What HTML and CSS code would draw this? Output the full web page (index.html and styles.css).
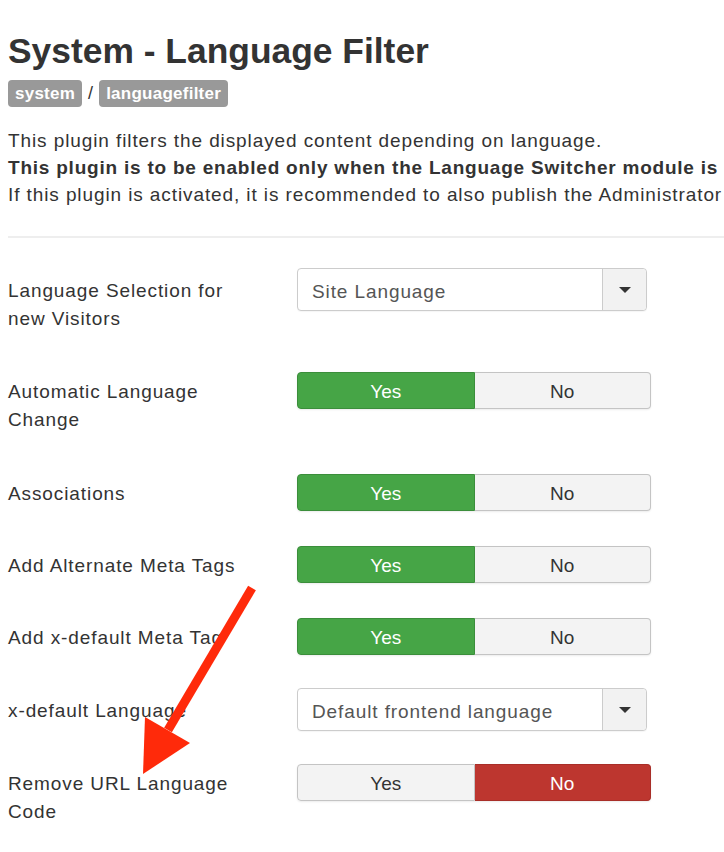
FILE: index.html
```html
<!DOCTYPE html>
<html>
<head>
<meta charset="utf-8">
<link rel="stylesheet" href="styles.css">
</head>
<body>
<div class="page">
  <h1 class="title">System - Language Filter</h1>
  <div class="tags">
    <span class="tag">system</span>
    <span class="slash">/</span>
    <span class="tag">languagefilter</span>
  </div>
  <div class="desc">
    <p>This plugin filters the displayed content depending on language.</p>
    <p class="strong">This plugin is to be enabled only when the Language Switcher module is published.</p>
    <p>If this plugin is activated, it is recommended to also publish the Administrator multilingual status module.</p>
  </div>
  <div class="rule"></div>

  <div class="form">
    <div class="row row-first">
      <div class="label label-select">Language Selection for<br>new Visitors</div>
      <div class="select">
        <span class="select-text">Site Language</span>
        <span class="select-btn"><span class="caret"></span></span>
      </div>
    </div>

    <div class="row row-second">
      <div class="label">Automatic Language<br>Change</div>
      <div class="toggle">
        <span class="opt yes active-yes">Yes</span>
        <span class="opt no">No</span>
      </div>
    </div>

    <div class="row">
      <div class="label">Associations</div>
      <div class="toggle">
        <span class="opt yes active-yes">Yes</span>
        <span class="opt no">No</span>
      </div>
    </div>

    <div class="row">
      <div class="label">Add Alternate Meta Tags</div>
      <div class="toggle">
        <span class="opt yes active-yes">Yes</span>
        <span class="opt no">No</span>
      </div>
    </div>

    <div class="row row-short">
      <div class="label">Add x-default Meta Tag</div>
      <div class="toggle">
        <span class="opt yes active-yes">Yes</span>
        <span class="opt no">No</span>
      </div>
    </div>

    <div class="row row-select">
      <div class="label label-select">x-default Language</div>
      <div class="select">
        <span class="select-text">Default frontend language</span>
        <span class="select-btn"><span class="caret"></span></span>
      </div>
    </div>

    <div class="row">
      <div class="label">Remove URL Language<br>Code</div>
      <div class="toggle">
        <span class="opt yes">Yes</span>
        <span class="opt no active-no">No</span>
      </div>
    </div>
  </div>

  <svg class="arrow" width="724" height="852" viewBox="0 0 724 852">
    <line x1="252" y1="588" x2="168" y2="730" stroke="#ff2a0a" stroke-width="9"/>
    <polygon points="145,717 190,743 143,774" fill="#ff2a0a"/>
  </svg>
</div>
</body>
</html>
```

FILE: styles.css
```css
html, body {
  margin: 0;
  padding: 0;
  background: #fff;
}

body {
  width: 724px;
  height: 852px;
  overflow: hidden;
  font-family: "Liberation Sans", Arial, Helvetica, sans-serif;
  color: #333;
}

.page {
  position: relative;
  padding: 31px 0 0 8px;
}

.title {
  margin: 0;
  font-size: 35.4px;
  line-height: 40px;
  font-weight: bold;
  color: #333;
}

.tags {
  margin-top: 9px;
  display: flex;
  align-items: center;
  gap: 6px;
  height: 27px;
}

.tag {
  background: #999;
  color: #fff;
  font-weight: bold;
  font-size: 17px;
  letter-spacing: 0.25px;
  line-height: 27px;
  padding: 0 7px;
  border-radius: 4px;
}

.slash {
  font-size: 18px;
  color: #333;
}

.desc {
  margin-top: 20px;
  font-size: 19px;
  letter-spacing: 0.9px;
  line-height: 27px;
  white-space: nowrap;
}

.desc p {
  margin: 0;
}

.desc .strong {
  font-weight: bold;
  letter-spacing: 0.78px;
}

.rule {
  margin-top: 28px;
  height: 2px;
  background: #eeeeee;
}

.form {
  margin-top: 30px;
}

.row {
  display: flex;
  align-items: flex-start;
  height: 72px;
}

.row-first {
  height: 104px;
}

.row-second {
  height: 102px;
}

.row-short {
  height: 70px;
}

.row-select {
  height: 76px;
}

.label {
  width: 289px;
  flex: none;
  font-size: 19px;
  letter-spacing: 0.9px;
  line-height: 28px;
  color: #333;
  padding-top: 6px;
}

.label-select {
  padding-top: 9px;
}

.select {
  width: 348px;
  height: 41px;
  border: 1px solid #cccccc;
  border-radius: 4px;
  display: flex;
  align-items: stretch;
  background: #fff;
  box-shadow: 0 1px 1px rgba(0,0,0,0.04);
}

.select-text {
  flex: 1;
  font-size: 19px;
  letter-spacing: 0.9px;
  line-height: 41px;
  padding-top: 2px;
  padding-left: 14px;
  color: #555;
}

.select-btn {
  width: 43px;
  border-left: 1px solid #cccccc;
  background: #f2f2f2;
  border-radius: 0 4px 4px 0;
  display: flex;
  align-items: center;
  justify-content: center;
}

.caret {
  width: 0;
  height: 0;
  border-left: 6px solid transparent;
  border-right: 6px solid transparent;
  border-top: 6px solid #333;
}

.toggle {
  width: 354px;
  height: 37px;
  display: flex;
  border-radius: 4px;
  box-shadow: 0 1px 2px rgba(0,0,0,0.08);
}

.opt {
  font-size: 19px;
  line-height: 33px;
  padding-top: 2px;
  text-align: center;
  border: 1px solid #c4c4c4;
  background: #f3f3f3;
  color: #333;
}

.yes {
  width: 176px;
  border-radius: 4px 0 0 4px;
}

.no {
  width: 176px;
  border-left: none;
  border-radius: 0 4px 4px 0;
}

.active-yes {
  background: #46a546;
  border-color: #3b8e3b;
  color: #fff;
}

.active-no {
  background: #bd362f;
  border-color: #a82e28;
  color: #fff;
}

.arrow {
  position: absolute;
  left: 0;
  top: 0;
  pointer-events: none;
}
```
